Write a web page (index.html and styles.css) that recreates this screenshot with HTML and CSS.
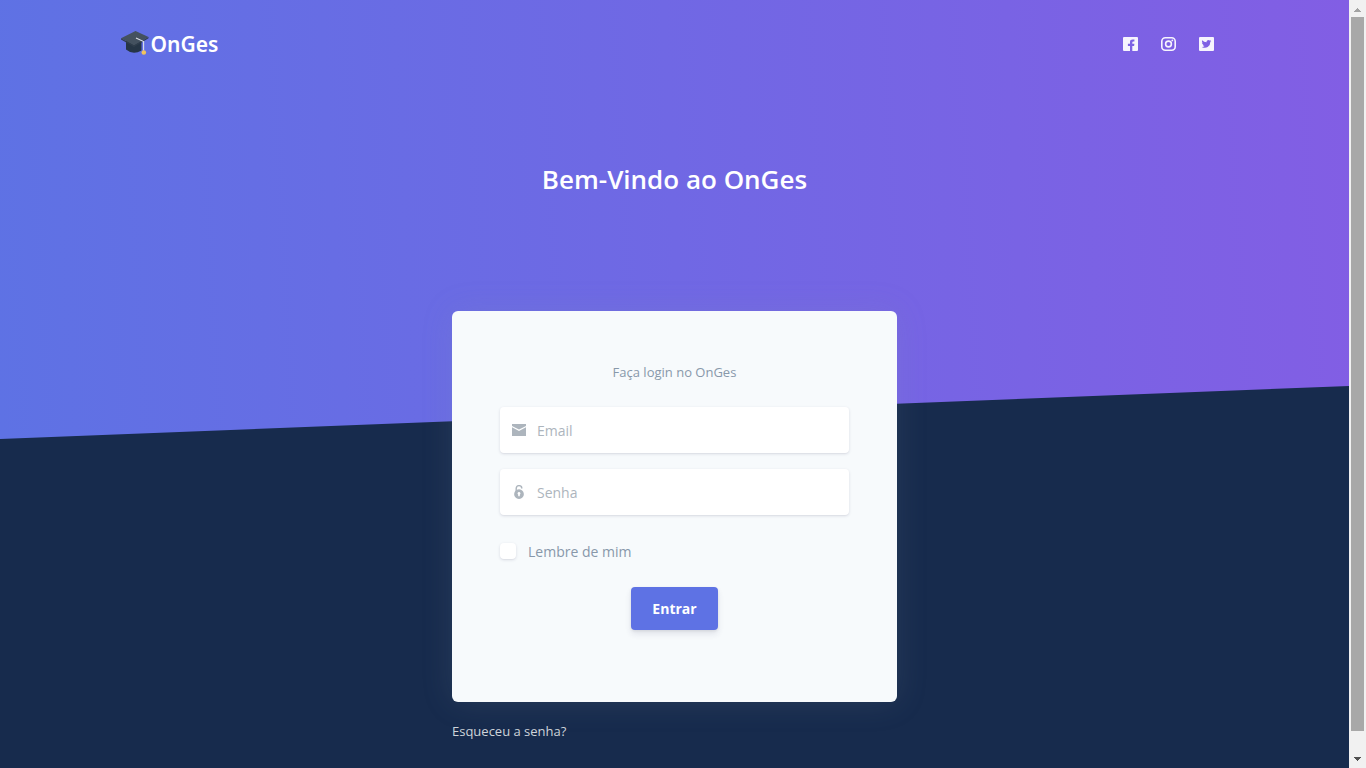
FILE: index.html
```html
<!DOCTYPE html>
<html lang="pt-BR">
<head>
<meta charset="utf-8">
<meta name="viewport" content="width=device-width, initial-scale=1">
<title>OnGes</title>
<link rel="stylesheet" href="styles.css">
</head>
<body>
<div class="page">
  <header class="hero">
    <nav class="navbar container">
      <a class="brand" href="#">
        <svg class="brand-cap" viewBox="0 0 28 26" aria-hidden="true">
          <path d="M5 10v8.500q7 6 15.500 1V10z" fill="#263545"/>
          <path d="M0 7.300 14.500 0 27.500 6 13 14.600z" fill="#44515f"/>
          <path d="M0 7.300 13 14.600 27.500 6v1.300L13 16 0 8.600z" fill="#303d4b"/>
          <path d="M15 7 22.600 10.500V19.500" fill="none" stroke="#dce0e8" stroke-width="1.100"/>
          <circle cx="22.800" cy="21.500" r="2.300" fill="#f1c45c"/>
        </svg>
        <span>OnGes</span>
      </a>
      <div class="social">
        <a href="#" aria-label="Facebook"><svg viewBox="0 0 15 14"><path fill="currentColor" fill-rule="evenodd" d="M1 0h13q1 0 1 1v12q0 1-1 1H9.300V8.900h1.800l.3-2.100H9.300V5.500q0-1 1.100-1h1V2.600Q7 1.800 7 4.800v2H4.900v2.100H7V14H1q-1 0-1-1V1q0-1 1-1z"/></svg></a>
        <a href="#" aria-label="Instagram"><svg viewBox="0 0 15 14" fill="none" stroke="currentColor"><rect x=".8" y=".8" width="13.400" height="12.400" rx="3.500" stroke-width="1.600"/><circle cx="7.500" cy="7" r="2.900" stroke-width="1.600"/><circle cx="11.300" cy="3.400" r=".9" fill="currentColor" stroke="none"/></svg></a>
        <a href="#" aria-label="Twitter"><svg viewBox="0 0 15 14"><path fill="currentColor" fill-rule="evenodd" d="M1 0h13q1 0 1 1v12q0 1-1 1H1q-1 0-1-1V1q0-1 1-1zM3.200 3.200q-.8 1.500.6 2.600l-.9-.2q0 1.400 1.600 2h-.9q.4 1.200 1.900 1.400-1.100 1-2.800.9 3.100 1.700 6 .2 2.700-1.600 2.600-5l1-1.200-1.200.3.900-1.200-1.300.5q-1.200-1-2.500-.1-.9.700-.6 1.800-2.700-.1-4.400-2z"/></svg></a>
      </div>
    </nav>
    <h1 class="title">Bem-Vindo ao OnGes</h1>
  </header>
  <main class="login">
    <section class="card">
      <p class="lead">Faça login no OnGes</p>
      <form>
        <div class="field">
          <label for="email" aria-label="Email"><svg viewBox="0 0 14 14"><path fill="currentColor" d="M0 1h14v1.900L7 6.600 0 2.900zM0 4.200l7 3.700 7-3.700V13H0z"/></svg></label>
          <input id="email" type="email" placeholder="Email">
        </div>
        <div class="field">
          <label for="senha" aria-label="Senha"><svg viewBox="0 0 14 14"><path d="M4.200 7V3.400C4.200-.3 9.800-.3 9.800 3.400" fill="none" stroke="currentColor" stroke-width="1.400"/><path fill="currentColor" fill-rule="evenodd" d="M7 4.300a4.850 4.850 0 1 0 .01 0zM7 7a1.450 1.450 0 0 1 .8 2.650V11.200H6.200V9.650A1.450 1.450 0 0 1 7 7z"/></svg></label>
          <input id="senha" type="password" placeholder="Senha">
        </div>
        <div class="remember">
          <input id="lembre" type="checkbox">
          <label for="lembre">Lembre de mim</label>
        </div>
        <button class="submit" type="button">Entrar</button>
      </form>
    </section>
    <a class="forgot" href="#">Esqueceu a senha?</a>
  </main>
</div>
<div class="scrollbar" aria-hidden="true">
  <svg class="arrow-up" viewBox="0 0 7 4"><path fill="currentColor" d="M3 0h1v1h1v1h1v1h1v1H0V3h1V2h1V1h1z"/></svg>
  <div class="track"><div class="thumb"></div></div>
  <svg class="arrow-down" viewBox="0 0 7 4"><path fill="currentColor" d="M0 0h7v1H6v1H5v1H4v1H3V3H2V2H1V1H0z"/></svg>
</div>
</body>
</html>
```
FILE: styles.css
```css
* {
  box-sizing: border-box;
}

body {
  margin: 0;
  display: flex;
  height: 100vh;
  overflow: hidden;
  background: #172b4d;
  color: #fff;
  font-family: "Open Sans", sans-serif;
  font-size: 16px;
  line-height: 24px;
}

a {
  color: inherit;
  text-decoration: none;
}

svg {
  display: block;
}

.page {
  flex: 1;
  min-width: 0;
}

.container {
  width: 100%;
  max-width: 1140px;
  margin: 0 auto;
  padding: 0 16px;
}

.hero {
  padding: 24px 0 240px;
  background: linear-gradient(87deg, #5e72e4, #825ee4);
  clip-path: polygon(0 0, 100% 0, 100% calc(100% - 53px), 0 100%);
}

.navbar {
  display: flex;
  align-items: center;
  justify-content: space-between;
  height: 40px;
}

.brand {
  display: flex;
  align-items: center;
  gap: 2px;
  font-family: "Noto Sans", sans-serif;
  font-size: 21px;
  font-weight: 600;
}

.brand-cap {
  width: 28px;
  height: 26px;
}

.social {
  display: flex;
  gap: 23px;
  padding-right: 15px;
  color: #f6f4fd;
}

.social svg {
  width: 15px;
  height: 14px;
}

.title {
  margin: 96px 0 0;
  text-align: center;
  font-size: 26px;
  font-weight: 600;
  line-height: 39px;
}

.login {
  position: relative;
  width: 100%;
  max-width: 445px;
  margin: -128px auto 0;
}

.card {
  padding: 48px 48px 72px;
  border-radius: 6px;
  background: #f7fafc;
  box-shadow: 0 0 32px rgba(136, 152, 170, 0.15);
}

.lead {
  margin: 0 0 22px;
  text-align: center;
  font-size: 13px;
  line-height: 26px;
  color: #8898aa;
}

.field {
  display: flex;
  align-items: center;
  height: 46px;
  margin-bottom: 16px;
  border-radius: 4px;
  background: #fff;
  box-shadow: 0 1px 3px rgba(50, 50, 93, 0.15), 0 1px 0 rgba(0, 0, 0, 0.02);
}

.field label {
  padding: 0 11px 0 12px;
  color: #adb5bd;
}

.field svg {
  width: 14px;
  height: 14px;
}

.field input {
  flex: 1;
  min-width: 0;
  height: 100%;
  padding: 0;
  border: 0;
  outline: 0;
  background: transparent;
  color: #8898aa;
  font: inherit;
  font-size: 14px;
}

.field input::placeholder {
  color: #adb5bd;
  opacity: 1;
}

.remember {
  display: flex;
  align-items: center;
  gap: 12px;
  margin: 24px 0;
  color: #8898aa;
  font-size: 14px;
}

.remember label {
  padding-top: 1px;
  line-height: 23px;
}

.remember input {
  appearance: none;
  width: 16px;
  height: 16px;
  margin: 0;
  border-radius: 4px;
  background: #fff;
  box-shadow: 0 1px 3px rgba(50, 50, 93, 0.15), 0 1px 0 rgba(0, 0, 0, 0.02);
}

.remember input:checked {
  background: #5e72e4;
}

.submit {
  display: block;
  height: 43px;
  margin: 0 auto;
  padding: 0 21px;
  border: 0;
  border-radius: 4px;
  background: #5e72e4;
  color: #fff;
  font: inherit;
  font-size: 14px;
  font-weight: 700;
  box-shadow: 0 4px 6px rgba(50, 50, 93, 0.11), 0 1px 3px rgba(0, 0, 0, 0.08);
}

.forgot {
  display: inline-block;
  margin-top: 17px;
  font-size: 13px;
  color: #ced4da;
}

.scrollbar {
  display: flex;
  flex-direction: column;
  align-items: center;
  width: 17px;
  padding: 8px 2px 7px;
  background: #f1f1f1;
}

.scrollbar svg {
  width: 7px;
  height: 4px;
}

.arrow-up {
  color: #a3a3a3;
}

.arrow-down {
  color: #505050;
}

.track {
  flex: 1;
  width: 100%;
  padding: 5px 0 26px;
}

.thumb {
  height: 100%;
  background: #a8a8a8;
}
```
